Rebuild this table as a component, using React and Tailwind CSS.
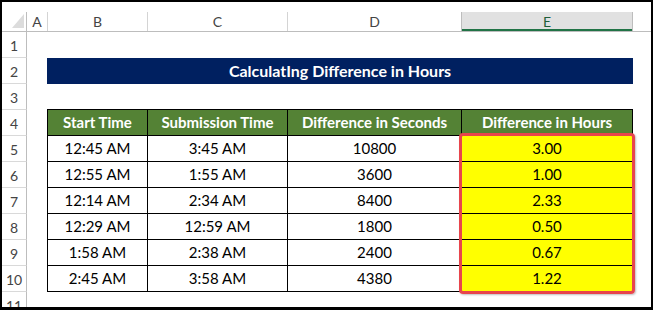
const rows = [
  ["12:45 AM", "3:45 AM", "10800", "3.00"],
  ["12:55 AM", "1:55 AM", "3600", "1.00"],
  ["12:14 AM", "2:34 AM", "8400", "2.33"],
  ["12:29 AM", "12:59 AM", "1800", "0.50"],
  ["1:58 AM", "2:38 AM", "2400", "0.67"],
  ["2:45 AM", "3:58 AM", "4380", "1.22"],
];

function RowNum({ n, h = "h-[26px]" }) {
  return (
    <div
      className={`${h} w-[25px] shrink-0 flex items-center justify-center border-r border-b border-r-[#bdbdbd] border-b-[#d9d9d9] text-[14px] text-[#444] pt-[2px]`}
    >
      {n}
    </div>
  );
}

function ColHead() {
  return (
    <div className="flex h-[20px] border-b border-[#bdbdbd] text-[14px] text-[#444]">
      <div className="w-[25px] shrink-0 border-r border-[#bdbdbd] relative">
        <svg className="absolute left-[10px] top-[2px]" width="12" height="14" viewBox="0 0 12 14">
          <polygon points="12,0 12,14 0,14" fill="#dcdcdc" />
        </svg>
      </div>
      <div className="w-[21px] shrink-0 border-r border-[#d4d4d4] flex items-center justify-center">A</div>
      <div className="w-[100px] shrink-0 border-r border-[#d4d4d4] flex items-center justify-center">B</div>
      <div className="w-[140px] shrink-0 border-r border-[#d4d4d4] flex items-center justify-center">C</div>
      <div className="w-[174px] shrink-0 border-r border-[#bdbdbd] flex items-center justify-center">D</div>
      <div className="w-[171px] shrink-0 border-r border-[#bdbdbd] bg-[#e1e1e1] flex items-center justify-center text-[#1e5e3a] relative">
        E
        <div className="absolute left-0 right-0 bottom-0 h-[2px] bg-[#217346]" />
      </div>
      <div className="w-[18px] shrink-0" />
    </div>
  );
}

export default function App() {
  return (
    <div
      className="relative w-[653px] h-[310px] overflow-hidden bg-white border-2 border-b-[3px] border-black"
      style={{ fontFamily: "Lato, 'Open Sans', sans-serif" }}
    >
      <div className="h-[10px]" />
      <ColHead />

      {/* row 1 */}
      <div className="flex">
        <RowNum n={1} />
      </div>

      {/* row 2: title */}
      <div className="flex">
        <RowNum n={2} />
        <div className="w-[20px] shrink-0" />
        <div className="w-[586px] h-[26px] shrink-0 bg-[#002060] text-white font-bold text-[16px] flex items-center justify-center">
          CalculatIng Difference in Hours
        </div>
      </div>

      {/* row 3 */}
      <div className="flex">
        <RowNum n={3} />
      </div>

      {/* row 4: table header */}
      <div className="flex">
        <RowNum n={4} />
        <div className="w-[20px] shrink-0" />
        <div className="flex -mt-px h-[27px] bg-[#548235] text-white font-bold text-[15px]">
          <div className="w-[101px] border border-black flex items-center justify-center">Start Time</div>
          <div className="w-[140px] border-y border-r border-black flex items-center justify-center">Submission Time</div>
          <div className="w-[174px] border-y border-r border-black flex items-center justify-center">Difference in Seconds</div>
          <div className="w-[171px] border-y border-r border-black flex items-center justify-center">Difference in Hours</div>
        </div>
      </div>

      {rows.map((r, i) => (
        <div key={i} className="flex">
          <RowNum n={i + 5} />
          <div className="w-[20px] shrink-0" />
          <div className="flex h-[26px] text-[15px] text-black">
            <div className="w-[101px] border-x border-b border-black flex items-center justify-center">{r[0]}</div>
            <div className="w-[140px] border-r border-b border-black flex items-center justify-center">{r[1]}</div>
            <div className="w-[174px] border-r border-b border-black flex items-center justify-center">{r[2]}</div>
            <div className="w-[171px] border-r border-b border-black bg-[#ffff00] flex items-center justify-center">{r[3]}</div>
          </div>
        </div>
      ))}

      {/* row 11 (partial) */}
      <div className="flex">
        <RowNum n={11} />
      </div>

      {/* highlight around result column */}
      <div className="absolute left-[457px] top-[131px] w-[176px] h-[161px] border-[3px] border-[#e8454c] rounded-[4px] shadow-[1px_1px_2px_rgba(0,0,0,0.25)]" />
    </div>
  );
}
